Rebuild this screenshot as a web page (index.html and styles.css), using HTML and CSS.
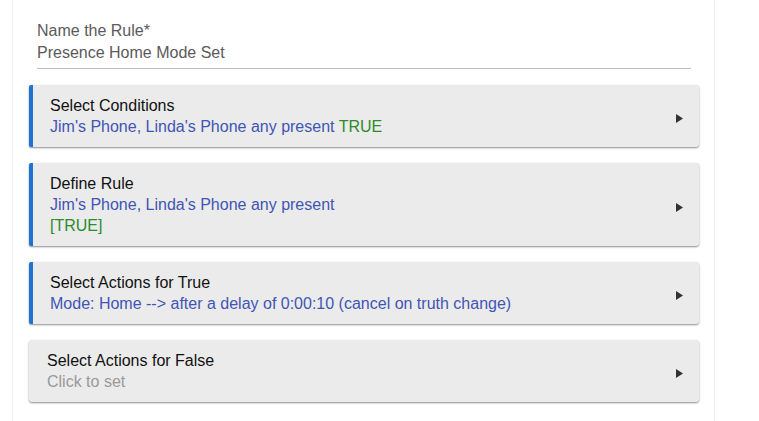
FILE: index.html
```html
<!DOCTYPE html>
<html>
<head>
<meta charset="utf-8">
<link rel="stylesheet" href="styles.css">
</head>
<body>
<div class="panel">
  <div class="field">
    <div class="field-label">Name the Rule*</div>
    <div class="field-value">Presence Home Mode Set</div>
  </div>
  <div class="cards">
    <div class="card marked">
      <div class="card-text">
        <div class="title">Select Conditions</div>
        <div class="desc">Jim's Phone, Linda's Phone any present <span class="ok">TRUE</span></div>
      </div>
      <svg class="arrow" width="7" height="9" viewBox="0 0 7 9"><path d="M0 0 L7 4.5 L0 9 Z" fill="#333"/></svg>
    </div>
    <div class="card marked">
      <div class="card-text">
        <div class="title">Define Rule</div>
        <div class="desc">Jim's Phone, Linda's Phone any present</div>
        <div class="ok">[TRUE]</div>
      </div>
      <svg class="arrow" width="7" height="9" viewBox="0 0 7 9"><path d="M0 0 L7 4.5 L0 9 Z" fill="#333"/></svg>
    </div>
    <div class="card marked">
      <div class="card-text">
        <div class="title">Select Actions for True</div>
        <div class="desc">Mode: Home --&gt; after a delay of 0:00:10 (cancel on truth change)</div>
      </div>
      <svg class="arrow" width="7" height="9" viewBox="0 0 7 9"><path d="M0 0 L7 4.5 L0 9 Z" fill="#333"/></svg>
    </div>
    <div class="card">
      <div class="card-text">
        <div class="title">Select Actions for False</div>
        <div class="hint">Click to set</div>
      </div>
      <svg class="arrow" width="7" height="9" viewBox="0 0 7 9"><path d="M0 0 L7 4.5 L0 9 Z" fill="#333"/></svg>
    </div>
  </div>
</div>
</body>
</html>
```

FILE: styles.css
```css
html, body {
  margin: 0;
  padding: 0;
  background: #fff;
  font-family: "Liberation Sans", Arial, sans-serif;
  font-size: 16px;
  overflow: hidden;
}
.panel {
  margin-left: 12px;
  width: 703px;
  min-height: 440px;
  box-sizing: border-box;
  padding: 20px 23px 0 24px;
  background: #fff;
  border-left: 1px solid #f0f0f0;
  border-right: 1px solid #ececec;
}
.field {
  border-bottom: 1px solid #bdbdbd;
  padding-bottom: 4px;
  color: #5a5a5a;
  line-height: 22px;
}
.cards {
  margin: 16px -8px 0 -8px;
  display: flex;
  flex-direction: column;
  gap: 16px;
}
.card {
  display: flex;
  align-items: center;
  background: #ebebeb;
  border-radius: 3px;
  padding: 10px 16px 10px 18px;
  line-height: 21px;
  box-shadow: 0 1px 2px rgba(0,0,0,0.45);
}
.card.marked {
  border-left: 4px solid #1e74d0;
  padding-left: 17px;
  border-radius: 2px 3px 3px 2px;
}
.card-text {
  flex: 1;
}
.title {
  color: #111;
}
.desc {
  color: #4155b5;
}
.ok {
  color: #2d8a2d;
}
.hint {
  color: #999;
}
.arrow {
  flex: none;
  margin-top: 5px;
}
```
